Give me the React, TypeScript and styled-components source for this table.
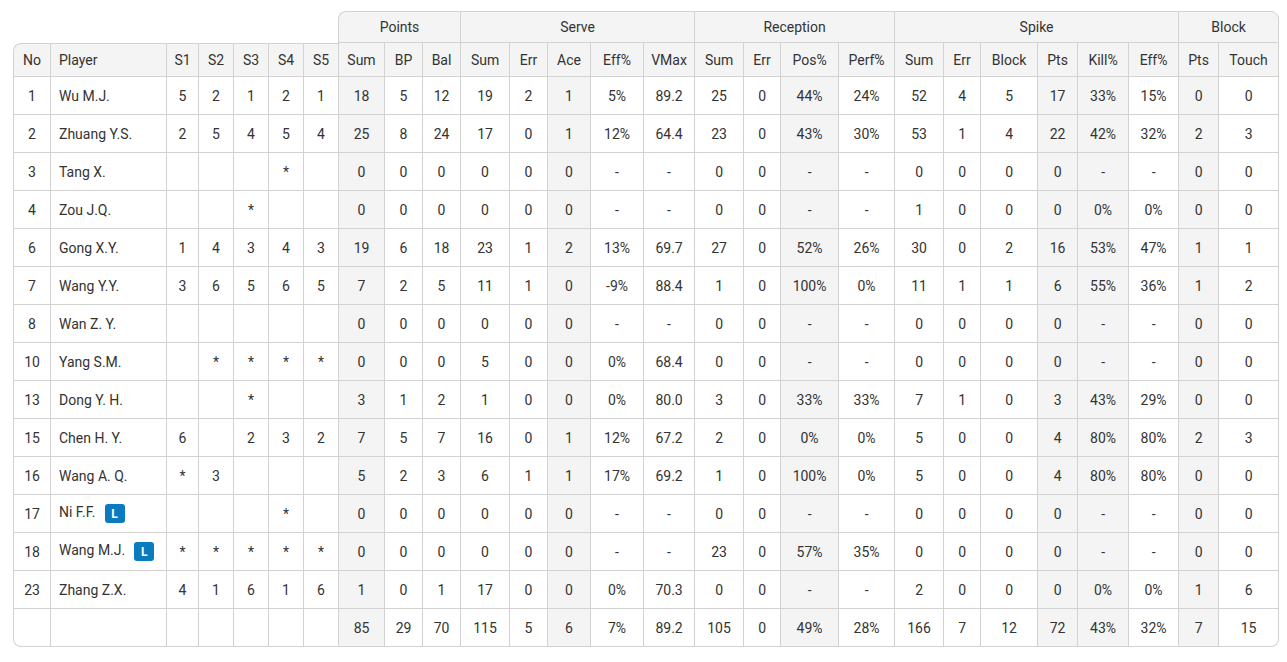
import React from 'react';
import styled, {createGlobalStyle, css} from 'styled-components';

const GlobalStyle = createGlobalStyle`
  html, body {
    margin: 0;
    padding: 0;
    background: #ffffff;
  }
  *, *::before, *::after {
    box-sizing: border-box;
  }
`;

const LINE = '#d2d2d2';
const SHADE = '#f4f4f4';
const RADIUS = '8px';

const Page = styled.div`
  padding: 11px 0 0 13px;
  font-family: Roboto, 'Liberation Sans', sans-serif;
  font-size: 14px;
  color: #333333;
`;

const Table = styled.table`
  width: 1266px;
  table-layout: fixed;
  border-collapse: separate;
  border-spacing: 0;
`;

const GroupCell = styled.th<{$first?: boolean; $last?: boolean}>`
  height: 32px;
  padding: 0;
  font-weight: 400;
  text-align: center;
  background: ${SHADE};
  border-top: 1px solid ${LINE};
  border-left: 1px solid ${LINE};
  border-bottom: 1px solid ${LINE};
  ${(p) =>
    p.$first &&
    css`
      border-top-left-radius: ${RADIUS};
    `}
  ${(p) =>
    p.$last &&
    css`
      border-right: 1px solid ${LINE};
      border-top-right-radius: ${RADIUS};
    `}
`;

const Spacer = styled.th`
  padding: 0;
  border: none;
`;

const HeadCell = styled.th<{$top?: boolean; $corner?: boolean; $last?: boolean; $left?: boolean}>`
  height: 34px;
  padding: 0 4px;
  font-weight: 400;
  text-align: ${(p) => (p.$left ? 'left' : 'center')};
  padding-left: ${(p) => (p.$left ? '8px' : '4px')};
  background: ${SHADE};
  border-left: 1px solid ${LINE};
  border-bottom: 1px solid ${LINE};
  white-space: nowrap;
  ${(p) =>
    p.$top &&
    css`
      border-top: 1px solid ${LINE};
    `}
  ${(p) =>
    p.$corner &&
    css`
      border-top-left-radius: ${RADIUS};
    `}
  ${(p) =>
    p.$last &&
    css`
      border-right: 1px solid ${LINE};
    `}
`;

const Cell = styled.td<{
  $shade?: boolean;
  $left?: boolean;
  $last?: boolean;
  $bl?: boolean;
  $br?: boolean;
}>`
  height: 38px;
  padding: 0 4px;
  text-align: ${(p) => (p.$left ? 'left' : 'center')};
  padding-left: ${(p) => (p.$left ? '8px' : '4px')};
  vertical-align: middle;
  background: ${(p) => (p.$shade ? SHADE : '#ffffff')};
  border-left: 1px solid ${LINE};
  border-bottom: 1px solid ${LINE};
  white-space: nowrap;
  ${(p) =>
    p.$last &&
    css`
      border-right: 1px solid ${LINE};
    `}
  ${(p) =>
    p.$bl &&
    css`
      border-bottom-left-radius: ${RADIUS};
    `}
  ${(p) =>
    p.$br &&
    css`
      border-bottom-right-radius: ${RADIUS};
    `}
`;

const LiberoBadge = styled.span`
  display: inline-flex;
  align-items: center;
  justify-content: center;
  width: 20px;
  height: 19px;
  margin-left: 9px;
  border-radius: 3px;
  background: #0b7bc0;
  color: #ffffff;
  font-size: 12px;
  font-weight: 700;
  vertical-align: middle;
`;

const widths = [
  37, 116, 32, 35, 35, 35, 35, 46, 38, 38, 49, 38, 43, 53, 51, 49, 37, 58, 56, 49, 37, 57, 40, 51,
  50, 40, 61
];

const shaded = new Set([7, 12, 17, 22, 23, 25]);

const groups = [
  {label: 'Points', span: 3},
  {label: 'Serve', span: 5},
  {label: 'Reception', span: 4},
  {label: 'Spike', span: 6},
  {label: 'Block', span: 2}
];

const columns = [
  'No', 'Player', 'S1', 'S2', 'S3', 'S4', 'S5',
  'Sum', 'BP', 'Bal',
  'Sum', 'Err', 'Ace', 'Eff%', 'VMax',
  'Sum', 'Err', 'Pos%', 'Perf%',
  'Sum', 'Err', 'Block', 'Pts', 'Kill%', 'Eff%',
  'Pts', 'Touch'
];

type Row = {cells: string[]; libero?: boolean};

const rows: Row[] = [
  {cells: ['1', 'Wu M.J.', '5', '2', '1', '2', '1', '18', '5', '12', '19', '2', '1', '5%', '89.2', '25', '0', '44%', '24%', '52', '4', '5', '17', '33%', '15%', '0', '0']},
  {cells: ['2', 'Zhuang Y.S.', '2', '5', '4', '5', '4', '25', '8', '24', '17', '0', '1', '12%', '64.4', '23', '0', '43%', '30%', '53', '1', '4', '22', '42%', '32%', '2', '3']},
  {cells: ['3', 'Tang X.', '', '', '', '*', '', '0', '0', '0', '0', '0', '0', '-', '-', '0', '0', '-', '-', '0', '0', '0', '0', '-', '-', '0', '0']},
  {cells: ['4', 'Zou J.Q.', '', '', '*', '', '', '0', '0', '0', '0', '0', '0', '-', '-', '0', '0', '-', '-', '1', '0', '0', '0', '0%', '0%', '0', '0']},
  {cells: ['6', 'Gong X.Y.', '1', '4', '3', '4', '3', '19', '6', '18', '23', '1', '2', '13%', '69.7', '27', '0', '52%', '26%', '30', '0', '2', '16', '53%', '47%', '1', '1']},
  {cells: ['7', 'Wang Y.Y.', '3', '6', '5', '6', '5', '7', '2', '5', '11', '1', '0', '-9%', '88.4', '1', '0', '100%', '0%', '11', '1', '1', '6', '55%', '36%', '1', '2']},
  {cells: ['8', 'Wan Z. Y.', '', '', '', '', '', '0', '0', '0', '0', '0', '0', '-', '-', '0', '0', '-', '-', '0', '0', '0', '0', '-', '-', '0', '0']},
  {cells: ['10', 'Yang S.M.', '', '*', '*', '*', '*', '0', '0', '0', '5', '0', '0', '0%', '68.4', '0', '0', '-', '-', '0', '0', '0', '0', '-', '-', '0', '0']},
  {cells: ['13', 'Dong Y. H.', '', '', '*', '', '', '3', '1', '2', '1', '0', '0', '0%', '80.0', '3', '0', '33%', '33%', '7', '1', '0', '3', '43%', '29%', '0', '0']},
  {cells: ['15', 'Chen H. Y.', '6', '', '2', '3', '2', '7', '5', '7', '16', '0', '1', '12%', '67.2', '2', '0', '0%', '0%', '5', '0', '0', '4', '80%', '80%', '2', '3']},
  {cells: ['16', 'Wang A. Q.', '*', '3', '', '', '', '5', '2', '3', '6', '1', '1', '17%', '69.2', '1', '0', '100%', '0%', '5', '0', '0', '4', '80%', '80%', '0', '0']},
  {cells: ['17', 'Ni F.F.', '', '', '', '*', '', '0', '0', '0', '0', '0', '0', '-', '-', '0', '0', '-', '-', '0', '0', '0', '0', '-', '-', '0', '0'], libero: true},
  {cells: ['18', 'Wang M.J.', '*', '*', '*', '*', '*', '0', '0', '0', '0', '0', '0', '-', '-', '23', '0', '57%', '35%', '0', '0', '0', '0', '-', '-', '0', '0'], libero: true},
  {cells: ['23', 'Zhang Z.X.', '4', '1', '6', '1', '6', '1', '0', '1', '17', '0', '0', '0%', '70.3', '0', '0', '-', '-', '2', '0', '0', '0', '0%', '0%', '1', '6']},
  {cells: ['', '', '', '', '', '', '', '85', '29', '70', '115', '5', '6', '7%', '89.2', '105', '0', '49%', '28%', '166', '7', '12', '72', '43%', '32%', '7', '15']}
];

export default function App() {
  const lastCol = columns.length - 1;
  return (
    <Page>
      <GlobalStyle />
      <Table>
        <colgroup>
          {widths.map((w, i) => (
            <col key={i} style={{width: w}} />
          ))}
        </colgroup>
        <thead>
          <tr>
            <Spacer colSpan={7} />
            {groups.map((g, i) => (
              <GroupCell
                key={g.label}
                colSpan={g.span}
                $first={i === 0}
                $last={i === groups.length - 1}
              >
                {g.label}
              </GroupCell>
            ))}
          </tr>
          <tr>
            {columns.map((c, i) => (
              <HeadCell
                key={i}
                $top={i < 7}
                $corner={i === 0}
                $last={i === lastCol}
                $left={i === 1}
              >
                {c}
              </HeadCell>
            ))}
          </tr>
        </thead>
        <tbody>
          {rows.map((row, r) => {
            const isLast = r === rows.length - 1;
            return (
              <tr key={r}>
                {row.cells.map((v, i) => (
                  <Cell
                    key={i}
                    $shade={shaded.has(i)}
                    $left={i === 1}
                    $last={i === lastCol}
                    $bl={isLast && i === 0}
                    $br={isLast && i === lastCol}
                  >
                    {v}
                    {i === 1 && row.libero && <LiberoBadge>L</LiberoBadge>}
                  </Cell>
                ))}
              </tr>
            );
          })}
        </tbody>
      </Table>
    </Page>
  );
}
